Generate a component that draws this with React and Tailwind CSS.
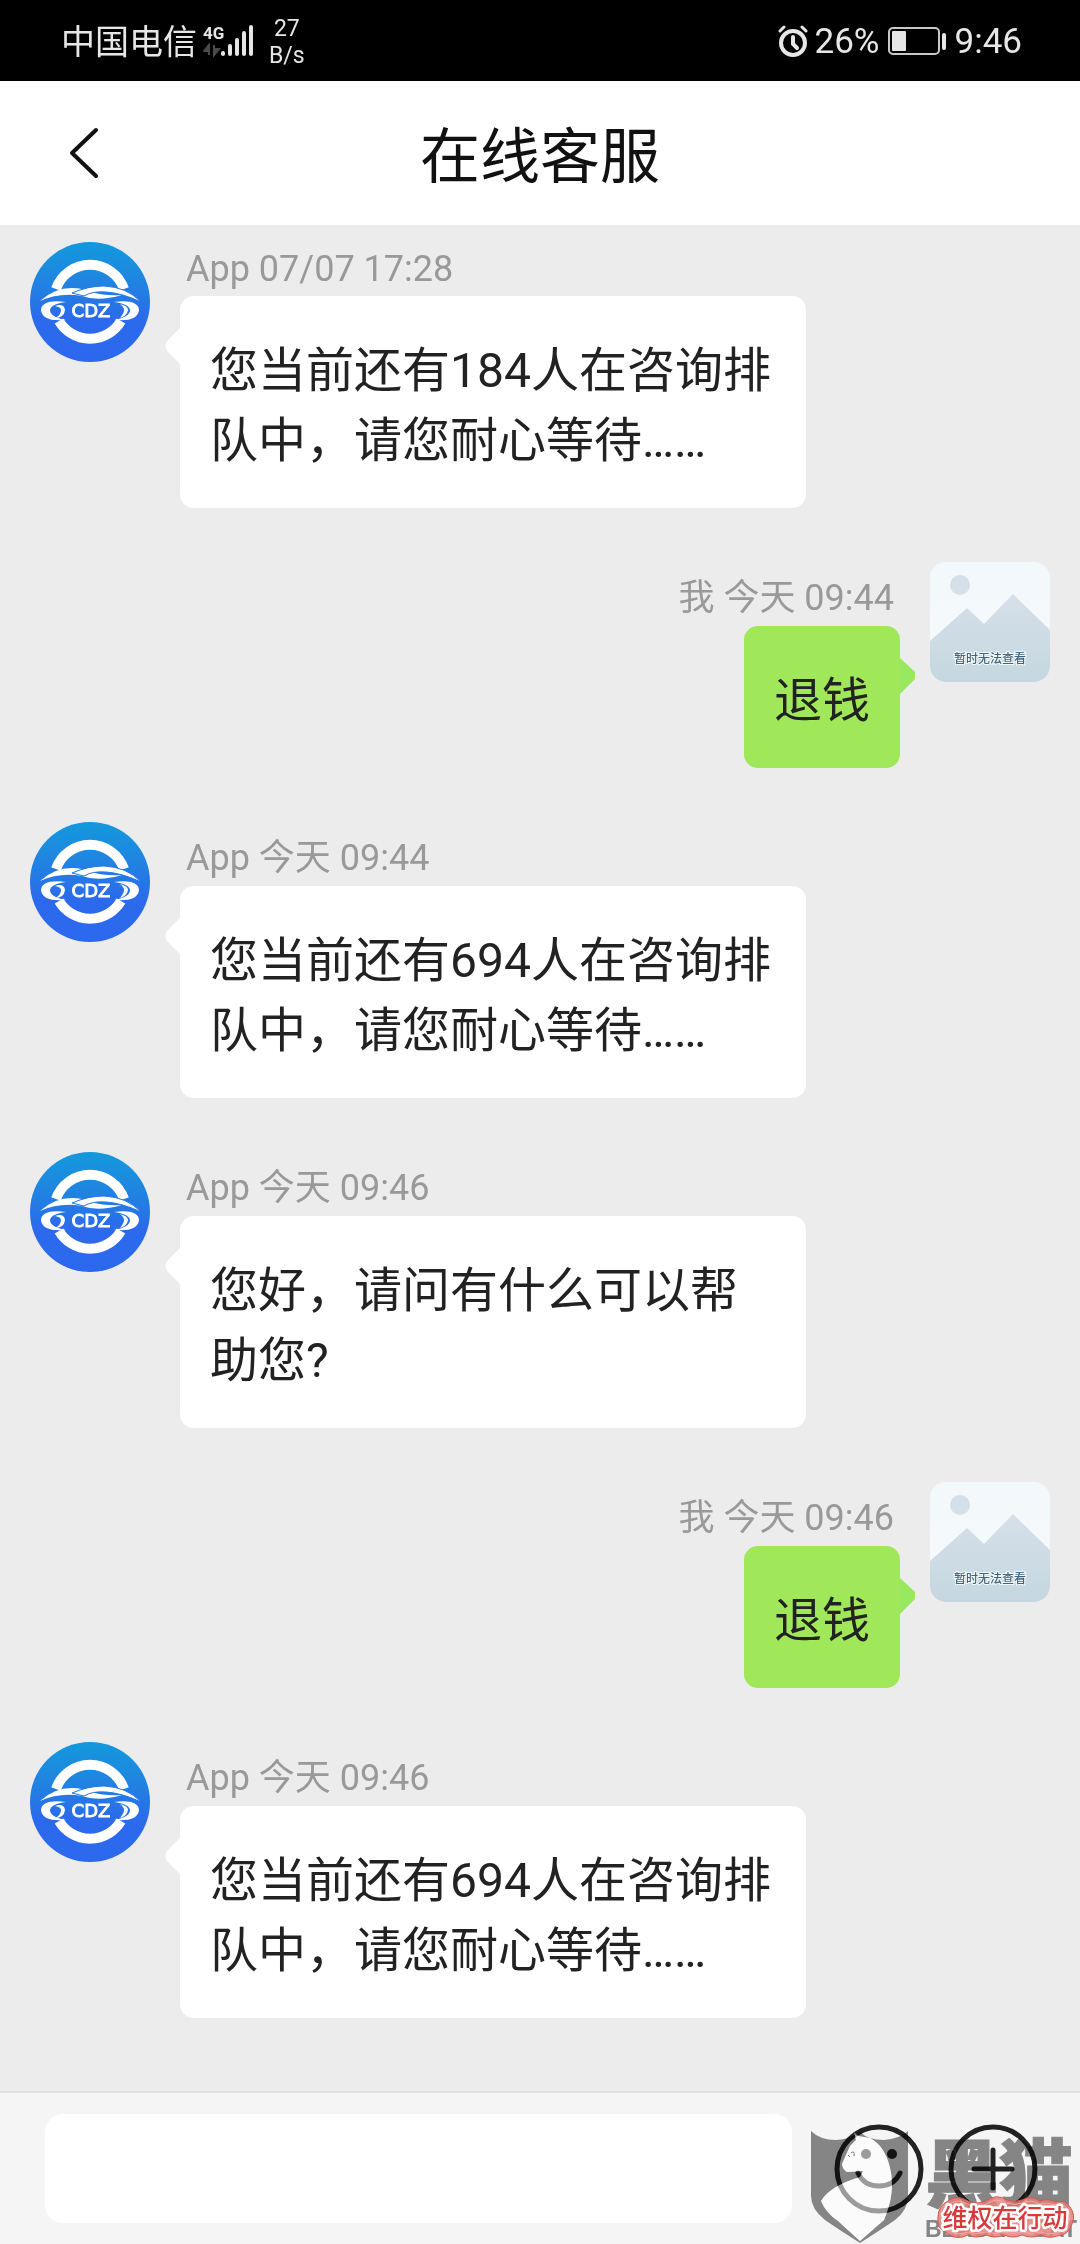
import { useState } from 'react';

const messages = [
  { id: 1, mine: false, name: 'App', time: '07/07 17:28', text: '您当前还有184人在咨询排队中，请您耐心等待……' },
  { id: 2, mine: true, name: '我', time: '今天 09:44', text: '退钱' },
  { id: 3, mine: false, name: 'App', time: '今天 09:44', text: '您当前还有694人在咨询排队中，请您耐心等待……' },
  { id: 4, mine: false, name: 'App', time: '今天 09:46', text: '您好，请问有什么可以帮助您?' },
  { id: 5, mine: true, name: '我', time: '今天 09:46', text: '退钱' },
  { id: 6, mine: false, name: 'App', time: '今天 09:46', text: '您当前还有694人在咨询排队中，请您耐心等待……' },
];

function StatusBar() {
  return (
    <div className="flex h-[81px] shrink-0 items-center justify-between bg-black pr-[58px] pl-[61px] text-[#e6e6e6]">
      <div className="flex items-center">
        <span className="pt-1 text-[34px]">中国电信</span>
        <svg className="ml-1.5 h-10 w-[52px]" viewBox="0 0 52 40">
          <text x="0" y="18" fontSize="17" fontWeight="700" fill="#e6e6e6" className="font-['Roboto',sans-serif]">4G</text>
          <path d="M6 24v10M6 24l-5 6h5zM11 24v10M11 34l5-6h-5z" stroke="#4a4a4a" strokeWidth="2" fill="#4a4a4a" />
          <g stroke="#e6e6e6" strokeWidth="4" strokeLinecap="round">
            <path d="M20 32v1M27 25v8M34 19v14M41 12v21M48 6v27" />
          </g>
        </svg>
        <div className="ml-3.5 pt-0.5 text-center text-[23px] leading-[27px]">
          <div>27</div>
          <div>B/s</div>
        </div>
      </div>
      <div className="flex items-center text-[35px]">
        <svg className="mr-1.5 h-8 w-8" viewBox="0 0 32 32" fill="none" stroke="#e6e6e6" strokeWidth="4" strokeLinecap="round">
          <circle cx="16" cy="18" r="12" />
          <path d="M16 12v7l4 4" />
          <path d="M3 6l4-4M29 6l-4-4" strokeWidth="3" />
        </svg>
        <span className="pt-1">26%</span>
        <svg className="mx-2 h-7 w-[59px]" viewBox="0 0 59 28">
          <rect x="1" y="1" width="50" height="26" rx="4" fill="none" stroke="#c8c8c8" strokeWidth="2" />
          <rect x="4" y="4" width="14" height="20" rx="1" fill="#e6e6e6" />
          <rect x="54" y="6" width="4" height="17" rx="2" fill="#e6e6e6" />
        </svg>
        <span className="pt-1">9:46</span>
      </div>
    </div>
  );
}

function BrandAvatar() {
  return (
    <svg className="h-[120px] w-[120px] shrink-0" viewBox="0 0 120 120" role="img" aria-label="CDZ">
      <defs>
        <linearGradient id="brand" x1="0" y1="0" x2="0" y2="1">
          <stop offset="0" stopColor="#1399dc" />
          <stop offset="0.3" stopColor="#1f86e0" />
          <stop offset="0.65" stopColor="#2b6aec" />
          <stop offset="1" stopColor="#2c68ee" />
        </linearGradient>
      </defs>
      <circle cx="60" cy="60" r="60" fill="url(#brand)" />
      <g fill="none" stroke="#fff" strokeWidth="10">
        <path d="M26 47A36 36 0 0 1 94 47" />
        <path d="M29 79A36 36 0 0 0 91 79" />
      </g>
      <path d="M10 59Q24 46 42 46Q52 46 62 50Q74 54 92 53Q68 60 52 54Q30 50 10 59Z" fill="#fff" />
      <path d="M42 51Q58 44 74 44Q97 45 111 60Q92 51 76 50Q62 49 54 54Z" fill="#fff" stroke="#2477e5" strokeWidth="1" />
      <path d="M36 60Q12 57 11 68Q12 80 36 78Q20 75 20 68Q21 62 36 60Z" fill="#fff" />
      <path d="M84 60Q108 57 109 68Q108 80 84 78Q100 75 100 68Q99 62 84 60Z" fill="#fff" />
      <path d="M25 64Q34 61 35 68Q34 76 25 76Q31 73 31 68Q31 65 25 64Z" fill="#fff" />
      <path d="M90 62Q98 64 98 68Q97 74 90 76Q94 71 94 68Q94 65 90 62Z" fill="#fff" />
      <text x="61" y="75" fontSize="18" textAnchor="middle" fill="#fff" stroke="#fff" strokeWidth="1" className="font-['DejaVu_Sans',sans-serif]">CDZ</text>
    </svg>
  );
}

function PlaceholderAvatar() {
  return (
    <svg className="h-[120px] w-[120px] shrink-0 rounded-[16px]" viewBox="0 0 120 120" role="img" aria-label="暂时无法查看">
      <defs>
        <linearGradient id="sky" x1="0" y1="0" x2="0" y2="1">
          <stop offset="0" stopColor="#f2f8fb" />
          <stop offset="1" stopColor="#f7fafc" />
        </linearGradient>
        <linearGradient id="hills" x1="0" y1="0" x2="0" y2="1">
          <stop offset="0" stopColor="#d6e0e9" />
          <stop offset="1" stopColor="#c5d7e0" />
        </linearGradient>
      </defs>
      <rect width="120" height="120" fill="url(#sky)" />
      <circle cx="30" cy="23" r="10" fill="#d5dfe9" />
      <path d="M0 79L37 46L54 62L83 32L120 68V120H0Z" fill="url(#hills)" />
      <text
        x="60"
        y="101"
        fontSize="12"
        fontWeight="500"
        textAnchor="middle"
        fill="#43647a"
        stroke="#f4f9fb"
        strokeWidth="2"
        paintOrder="stroke"
      >
        暂时无法查看
      </text>
    </svg>
  );
}

function Message({ mine, name, time, text }) {
  return (
    <li className={`flex gap-[30px] ${mine ? 'flex-row-reverse' : ''}`}>
      {mine ? <PlaceholderAvatar /> : <BrandAvatar />}
      <div className={`flex min-w-0 flex-col pt-1.5 ${mine ? 'items-end' : 'items-start'}`}>
        <div className="px-1.5 pb-1.5 text-[36px] leading-[normal] text-[#999]">
          {name} {time}
        </div>
        <div
          className={`relative max-w-[626px] rounded-[14px] px-[30px] pt-10 pb-8 text-[48px] leading-[70px] text-[#222] ${
            mine ? 'bg-[#a0e75a]' : 'bg-white'
          }`}
        >
          {mine ? (
            <svg className="absolute top-8 left-full h-9 w-[15px]" viewBox="0 0 15 36" fill="#98e860">
              <path d="M0 0L15 14V21L0 36Z" />
            </svg>
          ) : (
            <svg className="absolute top-8 right-full h-9 w-[15px]" viewBox="0 0 15 36" fill="#fff">
              <path d="M15 0L2 13Q-1 18 2 23L15 36Z" />
            </svg>
          )}
          {text}
        </div>
      </div>
    </li>
  );
}

function Watermark() {
  return (
    <div className="pointer-events-none">
      <svg className="absolute right-0 bottom-0 h-[134px] w-[272px] mix-blend-multiply" viewBox="0 0 272 134" fill="#8c8a8b">
        <path
          fillRule="evenodd"
          d="M3 21Q12 30 28 30Q42 29 52 22Q60 30 76 30Q91 29 100 21V86Q100 100 87 110Q74 119 52 133Q30 119 17 110Q3 99 3 86Z
             M46 22L50 26L62 28Q77 36 82 58Q88 82 76 110L52 131L30 111Q18 103 13 91Q22 76 52 67L55 61L39 62Q35 60 34 54L42 36L48 30Z"
        />
        <text x="117" y="91" fontSize="74" fontWeight="900" stroke="#8c8a8b" strokeWidth="1">黑猫</text>
        <g fontSize="23" fontWeight="700" className="font-['Liberation_Sans',sans-serif]">
          <text x="117" y="127">BLACK</text>
          <text x="269" y="127" textAnchor="end">CAT</text>
        </g>
      </svg>
      <svg className="absolute right-0 bottom-0 h-[134px] w-[272px]" viewBox="0 0 272 134">
        <path
          d="M46 22L50 26L62 28Q77 36 82 58Q88 82 76 110L52 131L30 111Q18 103 13 91Q22 76 52 67L55 61L39 62Q35 60 34 54L42 36L48 30Z"
          fill="#fff"
          fillOpacity="0.55"
        />
        <path d="M43 43q4-3 3 3M40 45l2 2" fill="none" stroke="#777" strokeWidth="1" />
        <path
          d="M140 91Q149 84 160 91Q169 95 178 91Q188 83 199 90Q206 93 214 90Q223 85 232 91Q240 88 248 92Q257 89 262 97Q268 105 264 114Q260 126 249 126Q241 129 233 125Q224 129 214 125Q205 129 196 125Q187 129 178 125Q168 129 160 125Q148 131 139 123Q128 119 130 107Q130 96 140 91Z"
          fill="#e4807a"
          fillOpacity="0.85"
          stroke="#cf5952"
          strokeWidth="1"
        />
        <path
          d="M142 94Q150 88 159 94Q169 98 179 94Q188 87 198 93Q206 96 215 93Q223 89 231 94Q240 92 247 95Q256 93 260 100Q264 106 260 114Q256 123 248 123Q241 125 233 122Q224 125 214 122Q205 125 196 122Q187 125 178 122Q168 125 160 122Q149 127 141 120Q132 116 134 107Q134 98 142 94Z"
          fill="none"
          stroke="#f3aaa4"
          strokeWidth="1"
        />
        <text x="197" y="117" fontSize="25" fontWeight="500" textAnchor="middle" fill="#d83a3c" stroke="#fff" strokeWidth="5" strokeLinejoin="round" paintOrder="stroke">
          维权在行动
        </text>
      </svg>
    </div>
  );
}

export default function App() {
  const [draft, setDraft] = useState('');

  return (
    <div lang="zh-CN" className="flex min-h-screen flex-col bg-[#ececec] font-['Roboto','Noto_Sans_CJK_SC',sans-serif]">
      <StatusBar />

      <header className="grid h-36 shrink-0 grid-cols-[1fr_auto_1fr] items-center bg-white">
        <button type="button" aria-label="返回" className="justify-self-start pl-[68px]">
          <svg className="h-[52px] w-8" viewBox="0 0 32 52" fill="none" stroke="#111" strokeWidth="4" strokeLinecap="round" strokeLinejoin="round">
            <path d="M28 3L4 26L28 49" />
          </svg>
        </button>
        <h1 className="pt-2.5 text-[60px] text-[#111]">在线客服</h1>
      </header>

      <main className="flex-1 px-[30px] pt-[17px] pb-[54px]">
        <ul className="flex flex-col gap-[54px]">
          {messages.map((m) => (
            <Message key={m.id} {...m} />
          ))}
        </ul>
      </main>

      <footer className="relative flex shrink-0 items-center border-t-2 border-[#e0e0e0] bg-[#f5f5f5] py-[21px] pr-[42px] pl-[45px]">
        <input
          type="text"
          aria-label="输入消息"
          value={draft}
          onChange={(e) => setDraft(e.target.value)}
          className="mr-[42px] h-[109px] min-w-0 flex-1 rounded-[18px] bg-white px-6 text-[48px] text-[#222] outline-none"
        />
        <button type="button" aria-label="表情" className="mr-6">
          <svg className="h-[90px] w-[90px]" viewBox="0 0 90 90" fill="none" stroke="#222" strokeWidth="5" strokeLinecap="round">
            <circle cx="45" cy="45" r="42" />
            <path d="M24 49Q30 62 45 62Q60 62 66 49" />
            <circle cx="32" cy="30" r="5" fill="#222" stroke="none" />
            <circle cx="58" cy="30" r="5" fill="#222" stroke="none" />
          </svg>
        </button>
        <button type="button" aria-label="更多">
          <svg className="h-[90px] w-[90px]" viewBox="0 0 90 90" fill="none" stroke="#222" strokeWidth="5" strokeLinecap="round">
            <circle cx="45" cy="45" r="42" />
            <path d="M45 26v38M26 45h38" />
          </svg>
        </button>
        <Watermark />
      </footer>
    </div>
  );
}
